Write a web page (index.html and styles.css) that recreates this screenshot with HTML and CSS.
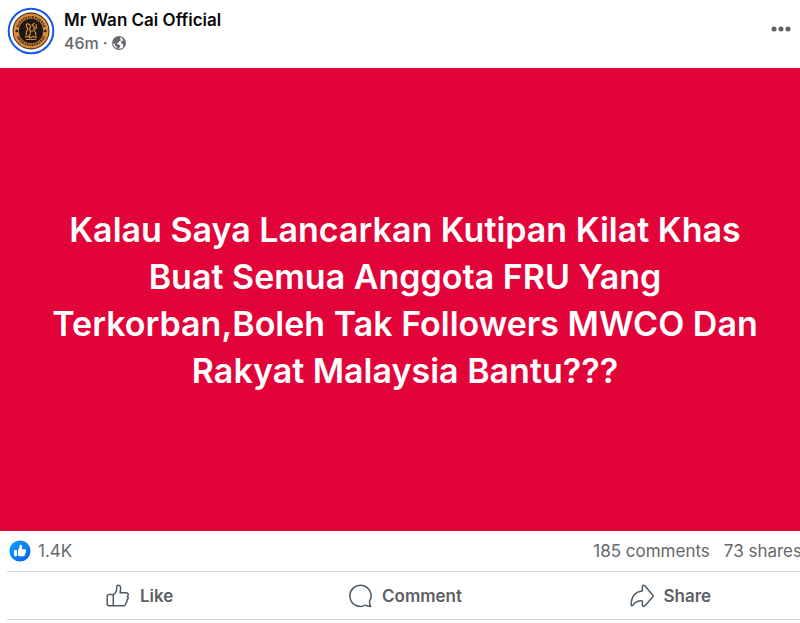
FILE: index.html
```
<!DOCTYPE html>
<html lang="ms">

<head>
    <meta charset="UTF-8" />
    <meta name="viewport" content="width=device-width, initial-scale=1.0" />
    <title>Mr Wan Cai Official</title>
    <link rel="stylesheet" href="styles.css">
</head>

<body>
    <article class="post">
        <header class="post-header">
            <svg class="avatar" viewBox="0 0 48 48" aria-hidden="true">
                <circle cx="24" cy="24" r="22.3" fill="#fff" stroke="#1459e8" stroke-width="2" />
                <circle cx="24" cy="24" r="18.5" fill="#1d1814" />
                <circle cx="24" cy="24" r="14.9" fill="none" stroke="#d98a3d" stroke-width="5.4" />
                <!-- lettering band -->
                <path d="M10.5 20a14.2 14.2 0 0 1 27 0" fill="none" stroke="#49301c" stroke-width="2.4" stroke-dasharray="1.6 .9 1 .8 1.8 1.2" />
                <path d="M11 29.500a14.2 14.2 0 0 0 26 0" fill="none" stroke="#49301c" stroke-width="2.4" stroke-dasharray="1.4 .8 1.8 .9" />
                <path d="M8 24l1.800-1.600L11.600 24l-1.800 1.600zM36.400 24l1.800-1.600L40 24l-1.800 1.600z" fill="#1d1814" />
                <!-- emblem -->
                <path d="M19.500 16.500l3 1 1 2.500-1 2 1 3-1 4.500M27.500 16l-2.500 2 2.500 2.500-1 2.500 2 2.500 .5 4M19.500 17v3l1.500 1.500-1.500 3-.5 4M29 17l.5 3.500-1.500 2M23 24h3M18 30.500l3-1.500 2 2 3-1.500 4 1.500M19 32.500h10" fill="none" stroke="#d98a3d" stroke-width="1.2" />
            </svg>
            <div class="author">
                <a class="author-name" href="#">Mr Wan Cai Official</a>
                <div class="post-meta">
                    <a href="#">46m</a>
                    <span>·</span>
                    <svg class="globe" viewBox="0 0 14 14" role="img" aria-label="Public">
                        <circle cx="7" cy="7" r="6.4" fill="#fff" stroke="#65686c" stroke-width="1.1" />
                        <path d="M1 5.500C1.600 2.700 4 .8 7 .7l1.300.8-.4 1.200 1 .9-.3 1.300-1.500.4-.3 1.300-1.600.5.2 1.300 1.700.2 1.200 1.300-.4 1.400-1.200.8-.3 1.300-1.400-.3-.4-2.400-1.600-1.200L2.800 8 1 6.800z" fill="#65686c" />
                        <path d="M10.300 1.600c1.900 1.100 3 2.900 3.100 5.100-.1 1.500-.6 2.900-1.500 4l-1-.9.200-1.500-1.300-.7-.9-1.300.8-1.400 1.500-.3-.1-1.200-1.100-.7z" fill="#65686c" />
                    </svg>
                </div>
            </div>
            <button class="more" type="button" aria-label="More options">
                <svg viewBox="0 0 20 6" aria-hidden="true">
                    <circle cx="3" cy="3" r="2.5" />
                    <circle cx="10" cy="3" r="2.5" />
                    <circle cx="17" cy="3" r="2.5" />
                </svg>
            </button>
        </header>

        <div class="message">
            <p>Kalau Saya Lancarkan Kutipan Kilat Khas<br>Buat Semua Anggota FRU Yang<br>Terkorban,Boleh Tak Followers MWCO Dan<br>Rakyat Malaysia Bantu???</p>
        </div>

        <div class="stats">
            <svg class="like-badge" viewBox="0 0 22 22" aria-hidden="true">
                <defs>
                    <linearGradient id="badge" x1="0" y1="0" x2="1" y2="1">
                        <stop offset="0" stop-color="#12a5fb" />
                        <stop offset="1" stop-color="#0a5cf0" />
                    </linearGradient>
                </defs>
                <circle cx="11" cy="11" r="10.6" fill="url(#badge)" />
                <rect x="5" y="10" width="3" height="6.2" rx="1" fill="#fff" />
                <path d="M9 10.2c1-1.1 1.4-2 1.4-3.6 0-1.2.5-1.8 1.2-1.8 1.2 0 1.7 1.1 1.5 2.5l-.3 1.9h3c.9 0 1.4.7 1.2 1.5l-1 4.1c-.2.9-.8 1.4-1.7 1.4h-3.3c-.8 0-1.500-.2-2-.7z" fill="#fff" />
            </svg>
            <span>1.4K</span>
            <a class="comments" href="#">185 comments</a>
            <a href="#">73 shares</a>
        </div>

        <div class="actions">
            <button type="button">
                <svg viewBox="0 0 24 24" aria-hidden="true">
                    <path d="M7.300 10.600v11.100M3.200 10.600h4.100c2.200-1.200 3.400-3.200 3.400-6V2.800c0-1 .6-1.600 1.500-1.600 1.700 0 2.600 1.500 2.400 3.600l-.5 4h6c1.500 0 2.400 1 2.100 2.300-.1.700-.5 1.100-.9 1.400.8.6 1 1.800.4 2.700-.2.4-.5.6-.8.8.5.8.3 1.900-.4 2.500-.2.2-.4.3-.6.4.1 1.800-.9 2.800-2.800 2.800H3.200c-1.200 0-2-.8-2-2v-7.100c0-1.200.8-2 2-2z" />
                </svg>
                Like
            </button>
            <button type="button">
                <svg viewBox="0 0 24 24" aria-hidden="true">
                    <path d="M21.600 17.200A10.600 10.600 0 1 0 17.400 21.200c1.700.9 3.400 1.300 5.200 1.200-.8-1.600-1.200-3.300-1-5.200z" />
                </svg>
                Comment
            </button>
            <button type="button">
                <svg viewBox="0 0 24 24" aria-hidden="true">
                    <path d="M12.400 2.800c0-1.500 1.300-2 2.300-1l8 9.200c.6.700.6 1.300 0 2l-8 8.900c-1 1-2.300.5-2.300-.9v-4.100c-4.100-.3-7 .9-9.500 4.300-.7.900-1.900.6-1.800-.6C1.500 12.600 5.200 7.700 12.400 7.100z" />
                </svg>
                Share
            </button>
        </div>
    </article>
</body>

</html>
```

FILE: styles.css
```
* {
    box-sizing: border-box;
}

body {
    font-family: Inter, Arial, sans-serif;
    margin: 0;
    background-color: #fff;
    color: #65686c;
    overflow-x: hidden;
}

a {
    color: inherit;
    text-decoration: none;
}

button {
    border: 0;
    padding: 0;
    background: none;
    font-family: inherit;
    cursor: pointer;
}

/* the card runs slightly past the right edge of the window */
.post {
    width: calc(100% + 10px);
}

.post-header {
    display: flex;
    align-items: center;
    gap: 9px;
    height: 68px;
    padding: 0 19px 6px 7px;
}

.avatar {
    width: 48px;
    height: 48px;
}

.author {
    flex: 1;
}

.author-name {
    display: block;
    color: #080809;
    font-size: 17px;
    font-weight: 600;
    line-height: 24px;
}

.post-meta {
    display: flex;
    align-items: center;
    gap: 4px;
    font-size: 16px;
    font-weight: 500;
    line-height: 22px;
}

.globe {
    width: 14px;
    height: 14px;
}

.more {
    display: flex;
    padding-bottom: 4px;
}

.more svg {
    width: 20px;
    height: 6px;
    fill: #606266;
}

.message {
    display: flex;
    align-items: center;
    justify-content: center;
    min-height: 463px;
    padding: 32px;
    background-color: #e20439;
    color: #fff;
    text-align: center;
}

.message p {
    margin: 0;
    font-size: 34px;
    font-weight: 600;
    line-height: 47px;
}

.stats {
    display: flex;
    align-items: center;
    gap: 7px;
    height: 41px;
    margin: 0 7px;
    padding: 0 1px 0 2px;
    font-size: 17px;
    border-bottom: 1px solid #d5d7da;
}

.like-badge {
    width: 22px;
    height: 22px;
}

.comments {
    margin-left: auto;
    margin-right: 7px;
}

.actions {
    display: grid;
    grid-template-columns: repeat(3, 1fr);
    height: 48px;
    margin: 0 7px;
    border-bottom: 1px solid #d5d7da;
}

.actions button {
    display: flex;
    align-items: center;
    justify-content: center;
    gap: 10px;
    color: #5d6065;
    font-size: 17px;
    font-weight: 600;
}

.actions svg {
    width: 24px;
    height: 24px;
    fill: none;
    stroke: #4e5a67;
    stroke-width: 1.5;
    stroke-linejoin: round;
}
```
